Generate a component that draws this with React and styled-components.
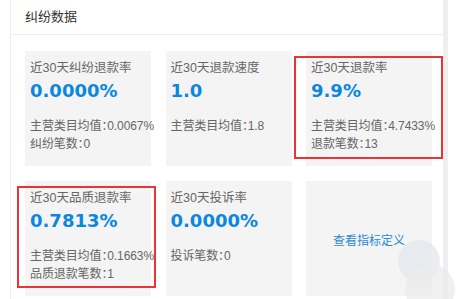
import React from 'react'
import styled, { createGlobalStyle } from 'styled-components'

const metrics = [
  {
    title: '近30天纠纷退款率',
    value: '0.0000%',
    lines: ['主营类目均值：0.0067%', '纠纷笔数：0'],
  },
  { title: '近30天退款速度', value: '1.0', lines: ['主营类目均值：1.8'] },
  {
    title: '近30天退款率',
    value: '9.9%',
    lines: ['主营类目均值：4.7433%', '退款笔数：13'],
    mark: { top: 5, right: -11, bottom: 7, left: -12 },
  },
  {
    title: '近30天品质退款率',
    value: '0.7813%',
    lines: ['主营类目均值：0.1663%', '品质退款笔数：1'],
    mark: { top: 5, right: -5, bottom: 8, left: -8 },
  },
  { title: '近30天投诉率', value: '0.0000%', lines: ['投诉笔数：0'] },
]

export default function App() {
  return (
    <Page>
      <GlobalStyle />
      <Panel>
        <Header>纠纷数据</Header>
        <Grid>
          {metrics.map((m) => (
            <Card key={m.title}>
              <Title>{m.title}</Title>
              <Value>{m.value}</Value>
              <Lines>
                {m.lines.map((l) => (
                  <Line key={l}>{l}</Line>
                ))}
              </Lines>
              {m.mark && <Mark {...m.mark} />}
            </Card>
          ))}
          <Card center>
            <Link>查看指标定义</Link>
          </Card>
        </Grid>
      </Panel>
      <Bubble size={42} x={398} y={240} color="#e3e7ec" />
      <Bubble size={50} x={405} y={264} color="#ebebeb" />
    </Page>
  )
}

const GlobalStyle = createGlobalStyle`
  body {
    margin: 0;
    background: #fff;
    font-family: "Liberation Sans", "Noto Sans CJK SC", sans-serif;
    overflow: hidden;
  }
`

const Page = styled.div`
  position: relative;
  width: 465px;
  height: 299px;
  overflow: hidden;
`

const Panel = styled.div`
  margin-left: 10px;
  width: 432px;
  height: 299px;
  border-left: 1px solid #eee;
  border-right: 5px solid #efefef;
`

const Header = styled.div`
  height: 34px;
  line-height: 33px;
  padding-left: 14px;
  font-size: 13px;
  color: #333;
  border-bottom: 1px solid #eee;
`

const Grid = styled.div`
  display: grid;
  grid-template-columns: repeat(3, 126px);
  grid-auto-rows: 115px;
  column-gap: 14.5px;
  row-gap: 14.5px;
  padding: 16px 0 0 14px;
`

const Card = styled.div`
  position: relative;
  background: #f4f4f4;
  padding: 8px 0 0 5px;
  display: flex;
  flex-direction: column;
  ${(p) =>
    p.center &&
    `
    padding: 0;
    align-items: center;
    justify-content: center;
  `}
`

const Title = styled.div`
  font-size: 12.5px;
  line-height: 18px;
  color: #666;
  white-space: nowrap;
`

const Value = styled.div`
  font-family: "DejaVu Sans", sans-serif;
  font-weight: bold;
  font-size: 18px;
  line-height: 24px;
  color: #0c87de;
  margin-top: 2px;
`

const Lines = styled.div`
  margin-top: 14px;
`

const Line = styled.div`
  font-size: 12px;
  line-height: 18px;
  color: #666;
  white-space: nowrap;
  font-feature-settings: "halt";
  letter-spacing: -0.1px;
`

const Link = styled.span`
  font-size: 12px;
  color: #2b8ad6;
  margin-top: 2px;
`

const Mark = styled.div`
  position: absolute;
  top: ${(p) => p.top}px;
  right: ${(p) => p.right}px;
  bottom: ${(p) => p.bottom}px;
  left: ${(p) => p.left}px;
  border: 2px solid #ec3438;
  pointer-events: none;
`

const Bubble = styled.div`
  position: absolute;
  left: ${(p) => p.x}px;
  top: ${(p) => p.y}px;
  width: ${(p) => p.size}px;
  height: ${(p) => p.size}px;
  border-radius: 50%;
  background: ${(p) => p.color};
  opacity: 0.75;
`
